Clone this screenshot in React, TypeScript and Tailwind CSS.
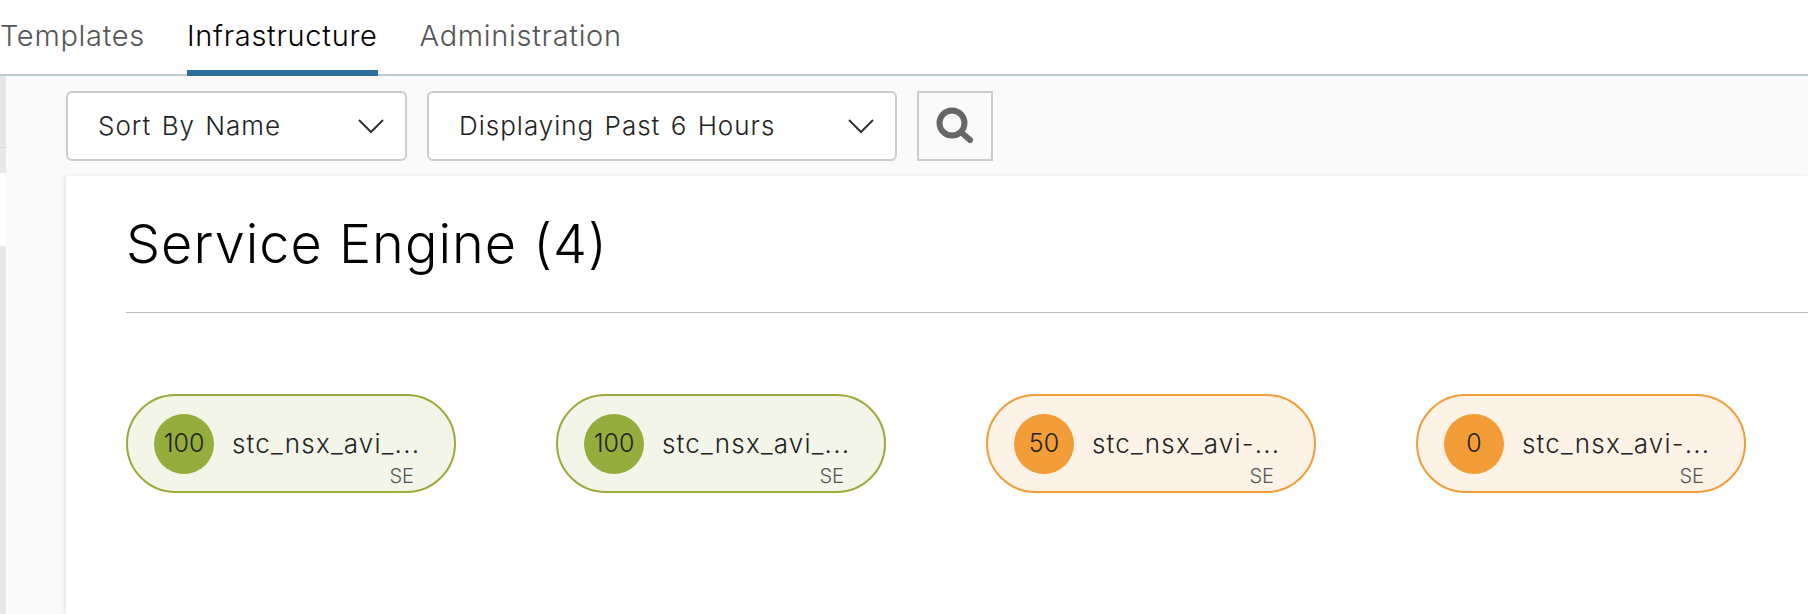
const engines = [
  { score: 100, name: 'stc_nsx_avi_...', tone: 'green' },
  { score: 100, name: 'stc_nsx_avi_...', tone: 'green' },
  { score: 50, name: 'stc_nsx_avi-...', tone: 'orange' },
  { score: 0, name: 'stc_nsx_avi-...', tone: 'orange' },
];

function Select({ label, width }: { label: string; width: string }) {
  return (
    <div className={`${width} h-[70px] flex items-center justify-between pl-[30px] pr-[21px] bg-white border-2 border-[#cccccc] rounded-[6px]`}>
      <span className="mb-[2px] text-[26px] font-light text-[#222222] tracking-[1px] [word-spacing:2px]">{label}</span>
      <svg width="26" height="16" viewBox="0 0 26 16" fill="none" stroke="#333333" strokeWidth="2">
        <path d="M1 2 L13 14 L25 2" />
      </svg>
    </div>
  );
}

function EnginePill({ score, name, tone }: { score: number; name: string; tone: string }) {
  const green = tone === 'green';
  return (
    <div
      className={`relative w-[330px] h-[99px] rounded-full border-2 flex items-center pl-[26px] ${
        green ? 'bg-[#f3f5e9] border-[#94ad3c]' : 'bg-[#fdf2e6] border-[#f39d38]'
      }`}
    >
      <div
        className={`w-[60px] h-[60px] rounded-full flex items-center justify-center text-[25px] font-light text-[#222222] shrink-0 ${
          green ? 'bg-[#94ad3c]' : 'bg-[#f39d38]'
        }`}
      >
        {score}
      </div>
      <span className="ml-[18px] text-[26px] font-light text-[#222222] tracking-[1.2px]">{name}</span>
      <span className="absolute right-[40px] bottom-[5px] text-[20px] font-light leading-[20px] text-[#555555]">SE</span>
    </div>
  );
}

export default function App() {
  return (
    <div className="w-[1808px] h-[614px] overflow-hidden bg-white font-['Inter',sans-serif]">
      {/* Tabs */}
      <nav className="h-[76px] flex gap-[42px] border-b-2 border-[#bfcccf]">
        <a className="h-[76px] pt-[16px] text-[29px] font-light leading-[40px] tracking-[0.7px] text-[#555555]">Templates</a>
        <a className="h-[76px] pt-[16px] text-[29px] font-light leading-[40px] tracking-[0.7px] text-[#000000] border-b-[6px] border-[#2f6f9f]">Infrastructure</a>
        <a className="h-[76px] pt-[16px] text-[29px] font-light leading-[40px] tracking-[0.7px] text-[#555555]">Administration</a>
      </nav>

      <div className="flex h-[538px]">
        {/* Left rail */}
        <div className="w-[6px] flex flex-col shrink-0">
          <div className="h-[72px] bg-[#e6e6e6] border-b border-[#d4d4d4]" />
          <div className="h-[25px] bg-[#e8e8e8]" />
          <div className="h-[73px] bg-white" />
          <div className="flex-1 bg-[#e8e8e8]" />
        </div>

        <main className="flex-1 bg-[#fafafa] pl-[60px]">
          {/* Toolbar */}
          <div className="h-[100px] pt-[15px] flex gap-[20px]">
            <Select label="Sort By Name" width="w-[341px]" />
            <Select label="Displaying Past 6 Hours" width="w-[470px]" />
            <button className="w-[76px] h-[70px] flex items-center justify-center border-2 border-[#cccccc]">
              <svg width="38" height="38" viewBox="0 0 38 38" fill="none" stroke="#666666">
                <circle cx="16" cy="16" r="12.5" strokeWidth="6" />
                <path d="M26 26 L34 33" strokeWidth="6" strokeLinecap="round" />
              </svg>
            </button>
          </div>

          {/* Card */}
          <section className="h-[438px] bg-white pl-[60px] shadow-[-2px_0_4px_rgba(0,0,0,0.08)]">
            <h1 className="pt-[33px] h-[137px] border-b border-[#bbbbbb] text-[54px] font-light leading-[70px] tracking-[1px] text-black">Service Engine (4)</h1>
            <div className="mt-[81px] flex gap-[100px]">
              {engines.map((e, i) => (
                <EnginePill key={i} {...e} />
              ))}
            </div>
          </section>
        </main>
      </div>
    </div>
  );
}
